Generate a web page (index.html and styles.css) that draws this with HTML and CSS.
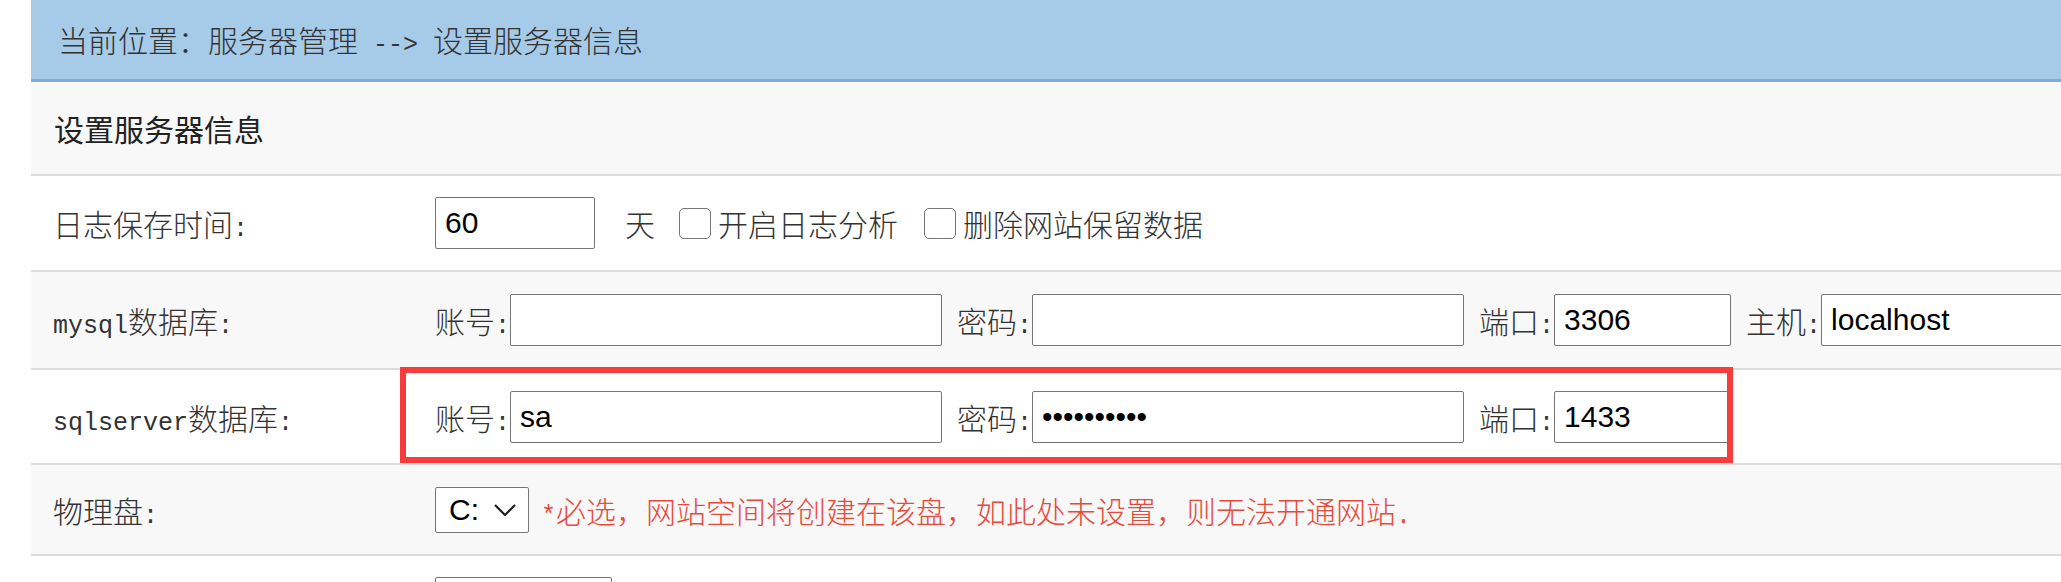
FILE: index.html
```html
<!DOCTYPE html>
<html lang="zh-CN">
<head>
<meta charset="utf-8">
<title>设置服务器信息</title>
<link rel="stylesheet" href="styles.css">
</head>
<body>
<div class="main">
  <div class="crumb">当前位置：服务器管理<span class="en"> --&gt; </span>设置服务器信息</div>
  <div class="section-title">设置服务器信息</div>
  <div class="form">
    <div class="row row-log">
      <div class="label">日志保存时间<span class="en">:</span></div>
      <div class="value">
        <input class="txt w160" type="text" value="60">
        <span class="unit">天</span>
        <label class="check check-first"><input type="checkbox">开启日志分析</label>
        <label class="check"><input type="checkbox">删除网站保留数据</label>
      </div>
    </div>
    <div class="row row-mysql alt">
      <div class="label"><span class="en">mysql</span>数据库<span class="en">:</span></div>
      <div class="value">
        <span class="fl first">账号<span class="en">:</span></span><input class="txt w432" type="text" value="">
        <span class="fl">密码<span class="en">:</span></span><input class="txt w432" type="password" value="">
        <span class="fl">端口<span class="en">:</span></span><input class="txt w177" type="text" value="3306">
        <span class="fl">主机<span class="en">:</span></span><input class="txt w432" type="text" value="localhost">
      </div>
    </div>
    <div class="row row-sql">
      <div class="label"><span class="en">sqlserver</span>数据库<span class="en">:</span></div>
      <div class="value">
        <span class="fl first">账号<span class="en">:</span></span><input class="txt w432" type="text" value="sa">
        <span class="fl">密码<span class="en">:</span></span><input class="txt w432" type="password" value="sapassword">
        <span class="fl">端口<span class="en">:</span></span><input class="txt w177" type="text" value="1433">
      </div>
      <div class="mark"></div>
    </div>
    <div class="row row-disk alt">
      <div class="label">物理盘<span class="en">:</span></div>
      <div class="value">
        <div class="select">
          <span>C:</span>
          <svg class="chev" width="22" height="12" viewBox="0 0 22 12"><polyline points="1,1 11,11 21,1" fill="none" stroke="#1f1f1f" stroke-width="2.2"/></svg>
        </div>
        <span class="hint"><span class="en">*</span>必选，网站空间将创建在该盘，如此处未设置，则无法开通网站<span class="en">.</span></span>
      </div>
    </div>
    <div class="row row-next">
      <div class="label"></div>
      <div class="value">
        <input class="txt w177" type="text" value="">
      </div>
    </div>
  </div>
</div>
</body>
</html>
```
FILE: styles.css
```css
* { box-sizing: border-box; }
html, body { margin: 0; padding: 0; background: #fff; }
body {
  overflow: hidden;
  font-family: "Noto Sans CJK SC", sans-serif;
  font-size: 30px;
  font-weight: 300;
  color: #333;
}
.main { margin-left: 31px; }
.en { font-family: "Liberation Mono", monospace; font-size: 25px; font-weight: 400; }

.crumb {
  height: 82px;
  line-height: 79px;
  background: #a5cbe9;
  border-bottom: 3px solid #80abdb;
  padding-left: 27px;
  white-space: nowrap;
}
.section-title {
  height: 94px;
  line-height: 92px;
  background: #f8f8f8;
  border-bottom: 2px solid #dcdcdc;
  padding-left: 23px;
  font-weight: 400;
  color: #222;
}

.row {
  display: flex;
  align-items: center;
  border-bottom: 2px solid #dcdcdc;
  background: #fff;
  white-space: nowrap;
}
.row.alt { background: #f8f8f8; }
.row-log { height: 96px; }
.row-mysql { height: 98px; }
.row-sql { height: 95px; position: relative; }
.row-disk { height: 91px; }
.row-next { height: 96px; }

.label { width: 404px; flex: none; padding-left: 22px; }
.value { display: flex; align-items: center; flex: none; }

.txt {
  height: 52px;
  margin: 0;
  padding: 0 9px;
  border: 1px solid #767676;
  border-radius: 2px;
  background: #fff;
  color: #000;
  font-family: "Liberation Sans", Arial, sans-serif;
  font-size: 30px;
  outline: none;
  flex: none;
}
.w160 { width: 160px; }
.w432 { width: 432px; }
.w177 { width: 177px; }

.unit { margin-left: 30px; }
.check { display: flex; align-items: center; margin-left: 26px; }
.check-first { margin-left: 24px; }
.check input {
  -webkit-appearance: none;
  appearance: none;
  width: 32px;
  height: 31px;
  margin: 0 7px 0 0;
  border: 1px solid #767676;
  border-radius: 5px;
  background: #fff;
}

.fl { margin-left: 15px; }
.fl.first { margin-left: 0; }

.select {
  width: 94px;
  height: 46px;
  display: flex;
  align-items: center;
  padding-left: 13px;
  border: 1px solid #767676;
  border-radius: 2px;
  background: #fff;
  color: #000;
  font-family: "Liberation Sans", Arial, sans-serif;
  font-size: 30px;
  font-weight: 400;
  flex: none;
}
.chev { margin-left: 15px; }
.hint { margin-left: 12px; color: #e64a3b; }

.mark {
  position: absolute;
  left: 369px;
  top: -3px;
  width: 1333px;
  height: 96px;
  border: 6px solid #f83c3c;
  pointer-events: none;
}
```
